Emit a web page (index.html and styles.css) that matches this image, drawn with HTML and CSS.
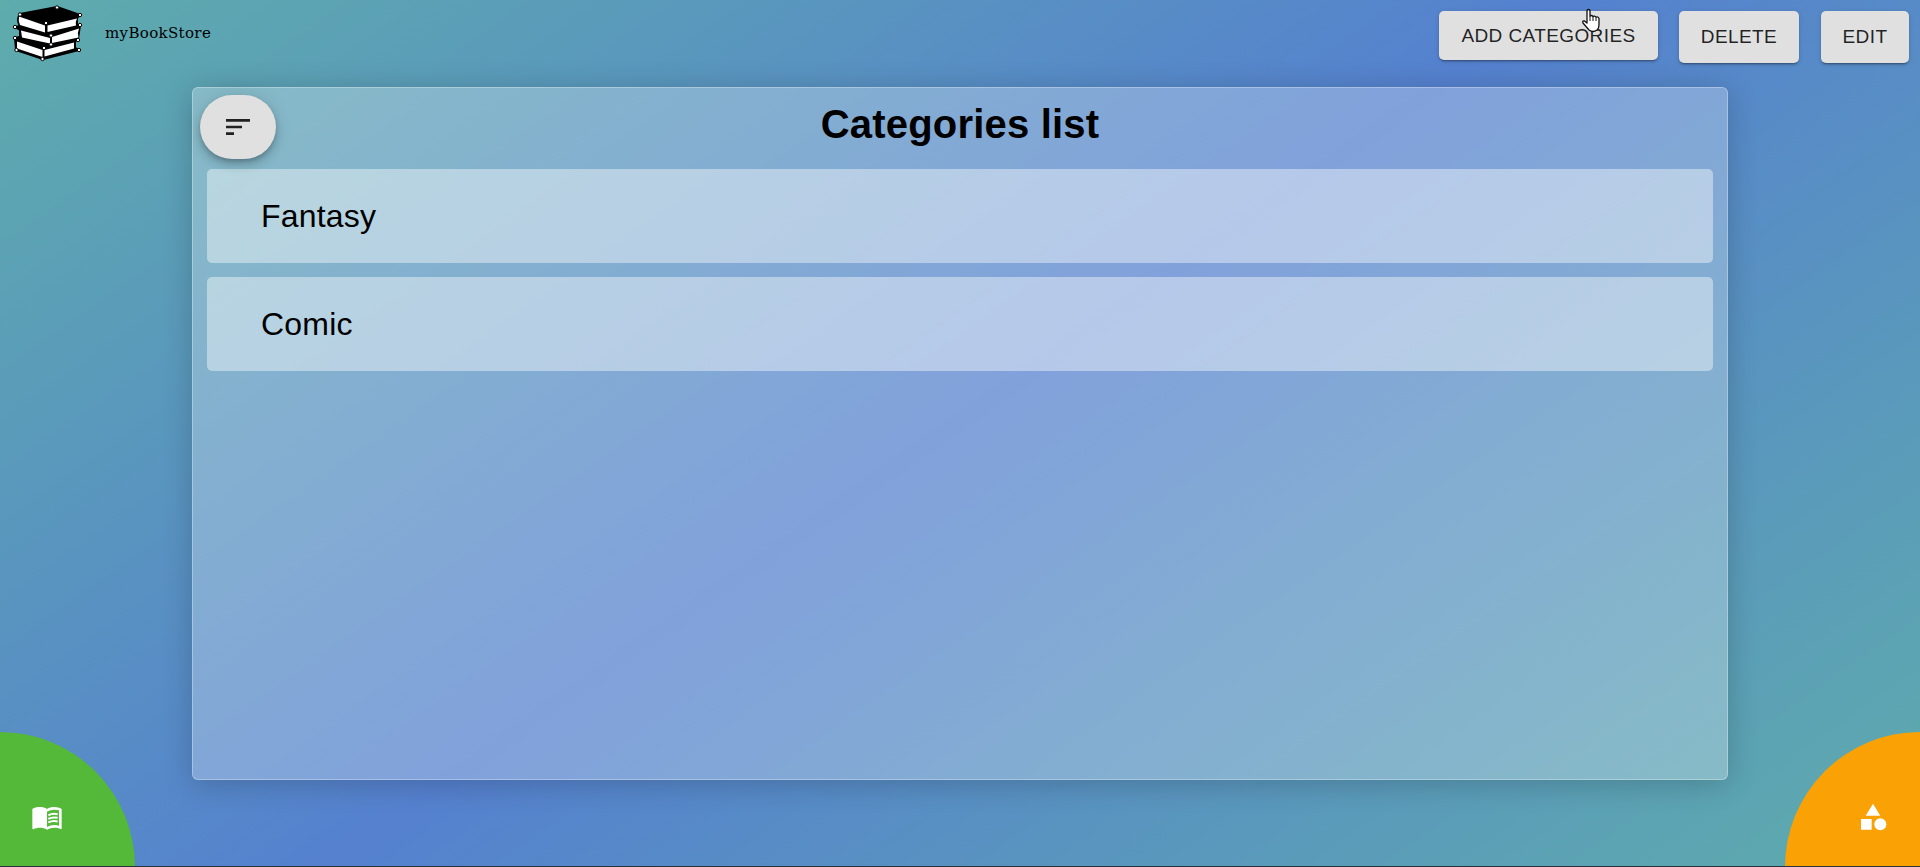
FILE: index.html
```html
<!DOCTYPE html>
<html lang="en">
<head>
<meta charset="utf-8">
<title>myBookStore</title>
<link rel="stylesheet" href="styles.css">
</head>
<body>
<div class="app">
  <header class="topbar">
    <div class="brand">
      <svg class="logo" viewBox="0 0 76 62">
        <g stroke="#000" stroke-width="2" stroke-linejoin="round">
          <path d="M5 36 34 29 67 37 65 40V46L69 48 33 57 6 48Z"/>
          <path d="M5 25 30 20 70 23 68 37 41 43 10 36 10 28Z"/>
          <path d="M10 12 47 5 70 13 67 16V24L41 32 10 24Q6 18 10 12Z"/>
        </g>
        <g fill="#fff">
          <path d="M9 14.500 35 23.500V30.500L10 23Q8 19 9 14.500Z"/>
          <path d="M37.500 23.500 67 16.500Q65 20 66 23.500L37.500 30Z"/>
          <path d="M11 28.500 40 36V41.500L12 35.500Z"/>
          <path d="M42 35 69 26.500Q67 31 68.500 35.500L42 41Z"/>
          <path d="M7 39.500 32.500 48V55L7 46.500Z"/>
          <path d="M34.500 48 64 40.500V46.500L34.500 54.500Z"/>
        </g>
        <g fill="#fff" stroke="#000">
          <circle cx="47" cy="5.500" r="1.700"/><circle cx="10" cy="12.500" r="1.700"/><circle cx="70" cy="13" r="1.700"/><circle cx="36" cy="21" r="1.700"/><circle cx="70" cy="23" r="1.700"/><circle cx="5" cy="25" r="1.700"/><circle cx="41" cy="33.500" r="1.700"/><circle cx="5" cy="36" r="1.700"/><circle cx="68" cy="38" r="1.700"/><circle cx="41" cy="42.500" r="1.700"/><circle cx="34" cy="46" r="1.700"/><circle cx="6.500" cy="48" r="1.700"/><circle cx="69" cy="48" r="1.700"/><circle cx="32.500" cy="57" r="1.700"/>
        </g>
      </svg>
      <span class="brand-name">myBookStore</span>
    </div>
    <nav class="actions">
      <button class="btn btn-add">ADD CATEGORIES</button>
      <button class="btn btn-delete">DELETE</button>
      <button class="btn btn-edit">EDIT</button>
    </nav>
  </header>
  <main class="panel">
    <button class="sort"><svg class="icon" viewBox="0 0 24 24"><path d="M3 18h6v-2H3v2zM3 6v2h18V6H3zm0 7h12v-2H3v2z"/></svg></button>
    <h1 class="title">Categories list</h1>
    <ul class="list">
      <li class="card">Fantasy</li>
      <li class="card">Comic</li>
    </ul>
  </main>
  <a class="corner corner-books"><svg class="icon" viewBox="0 0 24 24"><path d="M21 5c-1.110-.35-2.330-.5-3.500-.5-1.950 0-4.050.4-5.500 1.500-1.450-1.100-3.550-1.500-5.500-1.500S2.450 4.900 1 6v14.650c0 .25.25.5.5.5.1 0 .15-.05.25-.05C3.100 20.450 5.050 20 6.500 20c1.950 0 4.050.4 5.500 1.500 1.350-.85 3.800-1.500 5.500-1.500 1.650 0 3.350.3 4.750 1.050.1.05.15.05.25.05.25 0 .5-.25.5-.5V6c-.6-.45-1.250-.75-2-1zm0 13.500c-1.100-.35-2.300-.5-3.500-.5-1.700 0-4.150.65-5.500 1.500V8c1.350-.85 3.800-1.500 5.500-1.500 1.200 0 2.400.15 3.500.5v11.500z"/><path fill="none" stroke="#fff" stroke-width="1.500" d="M13 10.700Q16 9.100 20 9.900M13 13.400Q16 11.800 20 12.600M13 16.100Q16 14.500 20 15.300"/></svg></a>
  <a class="corner corner-categories"><svg class="icon" viewBox="0 0 24 24"><path d="M12 2 6.500 11h11zM3 13.500h8v8H3z"/><circle cx="17.500" cy="17.500" r="4.500"/></svg></a>
  <svg class="pointer" viewBox="0 0 20 26"><path fill="#fff" stroke="#111" stroke-width="1.300" stroke-linejoin="round" d="M6 2.500Q7.500 .5 9 2.500V8Q10.500 6.800 12 8.500 13.500 7.300 15 9.200 17 8.200 18 10.500V17Q18 20 16 22 12 25 8 22L2 15Q1 12.500 3.500 13L6 15Z"/><path fill="none" stroke="#111" d="M9 8v5M12 8.500V13M15 9.500V13"/></svg>
</div>
</body>
</html>
```
FILE: styles.css
```css
* { box-sizing: border-box; }
body {
  margin: 0;
  font-family: "Liberation Sans", Arial, sans-serif;
  color: #000;
}
.app {
  position: relative;
  height: 867px;
  overflow: hidden;
  display: flex;
  flex-direction: column;
  align-items: center;
  background: linear-gradient(145deg, #5eacac 0%, #5581cf 49.500%, #5eacac 100%);
  border-bottom: 1px solid #26333d;
}
.topbar {
  width: 100%;
  height: 87px;
  flex: none;
  display: flex;
  justify-content: space-between;
  align-items: flex-start;
  padding: 11px 11px 0 10px;
}
.brand { display: flex; align-items: center; gap: 19px; margin-top: -9px; }
.logo { width: 76px; height: 62px; }
.brand-name { font: 15px "DejaVu Serif", serif; letter-spacing: 0.35px; }
.actions { display: flex; align-items: flex-start; gap: 21px; }
.btn {
  height: 52px;
  padding: 0;
  border: 0;
  border-radius: 5px;
  background: #e0e0e0;
  color: rgba(0, 0, 0, 0.87);
  font: 19px "Liberation Sans", Arial, sans-serif;
  letter-spacing: 0.4px;
  white-space: nowrap;
  box-shadow: 0 3px 1px -2px rgba(0,0,0,.2), 0 2px 2px rgba(0,0,0,.14), 0 1px 5px rgba(0,0,0,.12);
}
.btn-add { width: 219px; height: 49px; }
.btn-delete { width: 120px; margin-right: 1px; }
.btn-edit { width: 88px; }
.panel {
  position: relative;
  width: 1536px;
  height: 693px;
  flex: none;
  padding: 12px 14px;
  border: 1px solid rgba(255, 255, 255, 0.3);
  border-radius: 6px;
  background: rgba(255, 255, 255, 0.26);
  box-shadow: 0 4px 30px rgba(0, 0, 0, 0.2);
}
.sort {
  position: absolute;
  left: 7px;
  top: 7px;
  width: 76px;
  height: 64px;
  padding: 0;
  border: 0;
  border-radius: 32px;
  background: #e0e0e0;
  display: grid;
  place-items: center;
  box-shadow: 0 3px 5px -1px rgba(0,0,0,.2), 0 6px 10px rgba(0,0,0,.14), 0 1px 18px rgba(0,0,0,.12);
}
.icon { width: 32px; height: 32px; fill: #fff; display: block; }
.sort .icon { fill: #212121; }
.title {
  margin: 0;
  height: 69px;
  text-align: center;
  font-size: 40px;
  line-height: 49px;
  letter-spacing: 0.2px;
}
.list { list-style: none; margin: 0; padding: 0; display: grid; gap: 14px; }
.card {
  height: 94px;
  padding-left: 54px;
  line-height: 94px;
  font-size: 32px;
  letter-spacing: 0.2px;
  border-radius: 5px;
  background: rgba(255, 255, 255, 0.42);
}
.corner {
  position: absolute;
  bottom: -1px;
  width: 135px;
  height: 135px;
  border-bottom: 1px solid #26333d;
}
.corner-books { left: 0; padding: 69px 0 0 31px; border-top-right-radius: 135px; background: #54b838; }
.corner-categories { right: 0; padding: 69px 0 0 72px; border-top-left-radius: 135px; background: #faa205; }
.pointer { position: absolute; left: 1581px; top: 8px; width: 20px; height: 26px; }
```
